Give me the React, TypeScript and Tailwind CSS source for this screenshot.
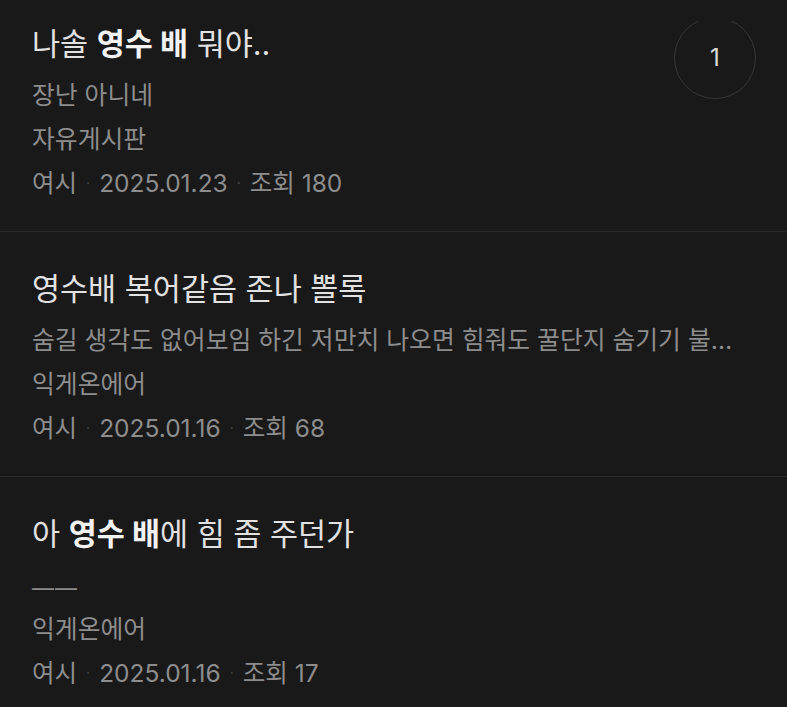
import React from "react";

type Post = {
  title: React.ReactNode;
  excerpt: string;
  board: string;
  author: string;
  date: string;
  views: number;
  comments?: number;
};

const posts: Post[] = [
  {
    title: (
      <>
        나솔 <b className="font-bold text-[#f2f2f2]">영수 배</b> 뭐야..
      </>
    ),
    excerpt: "장난 아니네",
    board: "자유게시판",
    author: "여시",
    date: "2025.01.23",
    views: 180,
    comments: 1,
  },
  {
    title: "영수배 복어같음 존나 뽈록",
    excerpt: "숨길 생각도 없어보임 하긴 저만치 나오면 힘줘도 꿀단지 숨기기 불…",
    board: "익게온에어",
    author: "여시",
    date: "2025.01.16",
    views: 68,
  },
  {
    title: (
      <>
        아 <b className="font-bold text-[#f2f2f2]">영수 배</b>에 힘 좀 주던가
      </>
    ),
    excerpt: "——",
    board: "익게온에어",
    author: "여시",
    date: "2025.01.16",
    views: 17,
  },
];

export default function App() {
  return (
    <div className="relative h-[707px] w-[787px] overflow-hidden bg-[#191919] font-['Inter','Noto_Sans_CJK_KR',sans-serif]">
      {/* sticky top strip that covers the scrolled list */}
      <div className="absolute inset-x-0 top-0 z-10 h-[21px] bg-[#191919]" />

      <div className="-mt-[13px]">
        {posts.map((post, i) => (
          <PostRow key={i} post={post} />
        ))}
      </div>
    </div>
  );
}

function PostRow({ post }: { post: Post }) {
  const isDash = post.excerpt === "——";
  return (
    <div className="flex items-start border-b border-[#2a2a2a] pt-[40px] pb-[26px] pl-[32px] pr-[31px]">
      <div className="min-w-0 flex-1">
        <div className="text-[30.5px] leading-[34px] text-[#e2e2e2] whitespace-nowrap">
          {post.title}
        </div>
        {isDash ? (
          <div className="mt-[12px] pt-[7px] text-[22px] leading-[37px] tracking-[1px] text-[#8d8d8d]">
            {post.excerpt}
          </div>
        ) : (
          <div className="mt-[12px] text-[24.8px] leading-[44px] text-[#8d8d8d] whitespace-nowrap">
            {post.excerpt}
          </div>
        )}
        <div className="text-[24.8px] leading-[44px] text-[#8d8d8d]">
          {post.board}
        </div>
        <div className="flex items-center text-[24.5px] leading-[44px] text-[#8d8d8d]">
          <span>{post.author}</span>
          <Dot />
          <span>{post.date}</span>
          <Dot />
          <span>조회 {post.views}</span>
        </div>
      </div>

      {post.comments !== undefined && (
        <div className="-mt-[10px] flex h-[82px] w-[82px] shrink-0 items-center justify-center rounded-full border border-[#383838] text-[24px] text-[#dcdcdc]">
          {post.comments}
        </div>
      )}
    </div>
  );
}

function Dot() {
  return <span className="mx-[9px] text-[14px] text-[#4f4f4f]">·</span>;
}
